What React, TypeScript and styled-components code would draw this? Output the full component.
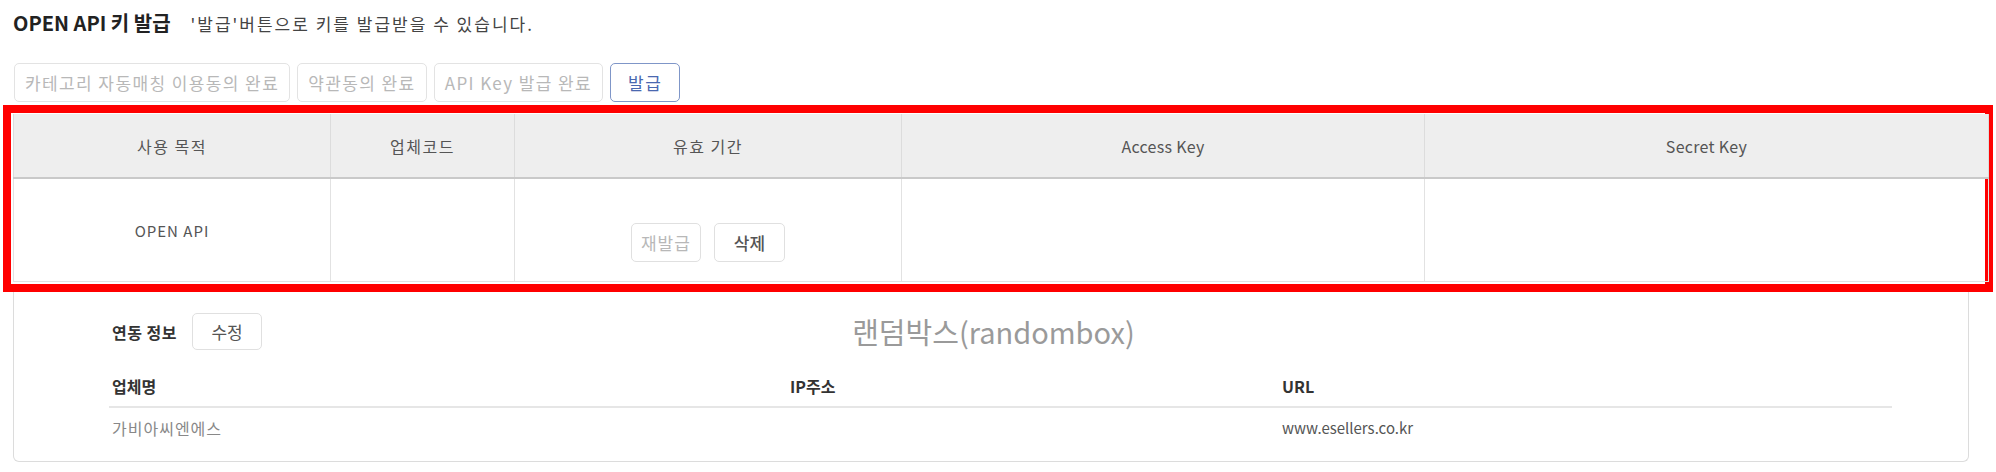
import styled, { createGlobalStyle } from 'styled-components';

const GlobalStyle = createGlobalStyle`
  body {
    margin: 0;
    background: #fff;
    font-family: 'Noto Sans CJK KR', 'Noto Sans', sans-serif;
  }
`;

const Page = styled.div`
  width: 1996px;
  height: 472px;
  overflow: hidden;
`;

const TitleBar = styled.div`
  display: flex;
  align-items: baseline;
  gap: 20px;
  padding: 8px 0 0 13px;
  height: 30px;
  line-height: 30px;
`;

const Title = styled.h2`
  margin: 0;
  font-size: 20px;
  font-weight: 700;
  color: #222;
`;

const Hint = styled.span`
  font-size: 17px;
  letter-spacing: 2px;
  color: #444;
`;

const StepRow = styled.div`
  display: flex;
  gap: 7px;
  margin: 25px 0 0 14px;
`;

const StepButton = styled.button<{ $active?: boolean }>`
  height: 39px;
  padding: 0 ${({ $active }) => ($active ? '17px' : '10px')};
  border: 1px solid ${({ $active }) => ($active ? '#7f96c8' : '#e3e3e3')};
  border-radius: 5px;
  background: #fff;
  font-family: inherit;
  font-size: 17px;
  letter-spacing: 1.4px;
  color: ${({ $active }) => ($active ? '#4a68b0' : '#b8b8b8')};
`;

const Highlight = styled.div`
  box-sizing: border-box;
  width: 1990px;
  margin: 3px 0 0 3px;
  border: 8px solid #ff0000;
  padding: 1px 2px 2px;
`;

const KeyTable = styled.table`
  width: 1970px;
  border-collapse: collapse;
  table-layout: fixed;
`;

const HeadCell = styled.th<{ $w: number; $latin?: boolean }>`
  width: ${({ $w }) => $w}px;
  height: 63px;
  padding: 0;
  background: #eeeeee;
  border-left: 1px solid #dcdcdc;
  border-right: 1px solid #dcdcdc;
  border-bottom: 2px solid #c9c9c9;
  font-size: 16px;
  font-weight: 400;
  letter-spacing: ${({ $latin }) => ($latin ? '0.3px' : '1.5px')};
  color: #555;
  text-align: center;
`;

const BodyCell = styled.td`
  height: 102px;
  padding: 0;
  border: 1px solid #e2e2e2;
  border-top: none;
  font-size: 15px;
  letter-spacing: 1px;
  color: #555;
  text-align: center;
  vertical-align: middle;
`;

const CellActions = styled.div`
  display: flex;
  justify-content: center;
  gap: 13px;
  margin-top: 24px;
`;

const SmallButton = styled.button<{ $disabled?: boolean }>`
  height: 39px;
  padding: 0 ${({ $disabled }) => ($disabled ? '9px' : '19px')};
  border: 1px solid #e0e0e0;
  border-radius: 5px;
  background: #fff;
  font-family: inherit;
  font-size: 17px;
  letter-spacing: ${({ $disabled }) => ($disabled ? '1px' : '0')};
  font-weight: ${({ $disabled }) => ($disabled ? 400 : 500)};
  color: ${({ $disabled }) => ($disabled ? '#b8b8b8' : '#555')};
`;

const Card = styled.div`
  box-sizing: border-box;
  width: 1956px;
  height: 170px;
  margin-left: 13px;
  padding: 21px 76px 0 95px;
  border: 1px solid #dcdcdc;
  border-top: none;
  border-radius: 0 0 6px 6px;
`;

const InfoHead = styled.div`
  display: grid;
  grid-template-columns: 1fr auto 1fr;
  align-items: center;
  height: 37px;
`;

const InfoLeft = styled.div`
  display: flex;
  align-items: center;
  gap: 15px;
  padding-left: 3px;
`;

const InfoTitle = styled.span`
  font-size: 16px;
  font-weight: 700;
  letter-spacing: 0.5px;
  color: #333;
`;

const EditButton = styled.button`
  width: 70px;
  height: 37px;
  border: 1px solid #e0e0e0;
  border-radius: 5px;
  background: #fff;
  font-family: inherit;
  font-size: 17px;
  color: #555;
`;

const ShopLabel = styled.span`
  font-size: 29px;
  line-height: 37px;
  color: #9a9a9a;
  margin-right: 14px;
`;

const InfoGrid = styled.div`
  display: grid;
  grid-template-columns: 678px 492px 1fr;
`;

const InfoHeadCell = styled.div`
  padding: 24px 3px 8px;
  line-height: 24px;
  font-size: 16px;
  font-weight: 700;
  color: #333;
  border-bottom: 2px solid #e6e6e6;
`;

const InfoCell = styled.div<{ $latin?: boolean }>`
  padding: 8px 3px;
  line-height: 24px;
  font-size: ${({ $latin }) => ($latin ? '15px' : '16px')};
  letter-spacing: ${({ $latin }) => ($latin ? '0' : '1px')};
  color: ${({ $latin }) => ($latin ? '#555' : '#888')};
`;

const columns = [
  { label: '사용 목적', width: 316 },
  { label: '업체코드', width: 183 },
  { label: '유효 기간', width: 386 },
  { label: 'Access Key', width: 522, latin: true },
  { label: 'Secret Key', width: 563, latin: true },
];

const steps = ['카테고리 자동매칭 이용동의 완료', '약관동의 완료', 'API Key 발급 완료'];

export default function App() {
  return (
    <Page>
      <GlobalStyle />
      <TitleBar>
        <Title>OPEN API 키 발급</Title>
        <Hint>'발급'버튼으로 키를 발급받을 수 있습니다.</Hint>
      </TitleBar>

      <StepRow>
        {steps.map((s) => (
          <StepButton key={s}>{s}</StepButton>
        ))}
        <StepButton $active>발급</StepButton>
      </StepRow>

      <Highlight>
        <KeyTable>
          <thead>
            <tr>
              {columns.map((c) => (
                <HeadCell key={c.label} $w={c.width} $latin={c.latin}>
                  {c.label}
                </HeadCell>
              ))}
            </tr>
          </thead>
          <tbody>
            <tr>
              <BodyCell>OPEN API</BodyCell>
              <BodyCell />
              <BodyCell>
                <CellActions>
                  <SmallButton $disabled>재발급</SmallButton>
                  <SmallButton>삭제</SmallButton>
                </CellActions>
              </BodyCell>
              <BodyCell />
              <BodyCell />
            </tr>
          </tbody>
        </KeyTable>
      </Highlight>

      <Card>
        <InfoHead>
          <InfoLeft>
            <InfoTitle>연동 정보</InfoTitle>
            <EditButton>수정</EditButton>
          </InfoLeft>
          <ShopLabel>랜덤박스(randombox)</ShopLabel>
          <div />
        </InfoHead>
        <InfoGrid>
          <InfoHeadCell>업체명</InfoHeadCell>
          <InfoHeadCell>IP주소</InfoHeadCell>
          <InfoHeadCell>URL</InfoHeadCell>
          <InfoCell>가비아씨엔에스</InfoCell>
          <InfoCell />
          <InfoCell $latin>www.esellers.co.kr</InfoCell>
        </InfoGrid>
      </Card>
    </Page>
  );
}
